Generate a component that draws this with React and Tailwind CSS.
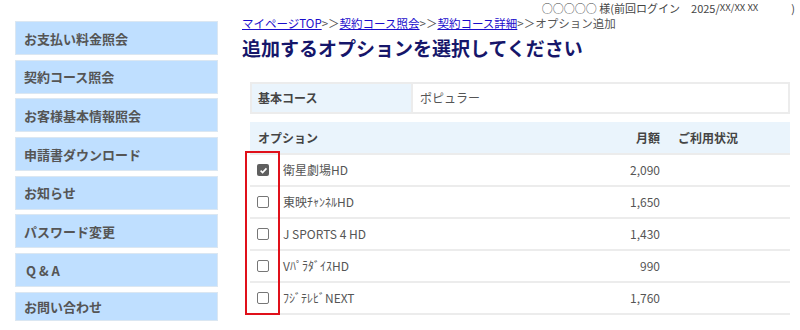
import React from "react";

const menu = [
  "お支払い料金照会",
  "契約コース照会",
  "お客様基本情報照会",
  "申請書ダウンロード",
  "お知らせ",
  "パスワード変更",
  "Q & A",
  "お問い合わせ",
];

const options = [
  { name: "衛星劇場HD", price: "2,090", checked: true },
  { name: "東映ﾁｬﾝﾈﾙHD", price: "1,650" },
  { name: "J SPORTS 4 HD", price: "1,430" },
  { name: "VﾊﾟﾗﾀﾞｲｽHD", price: "990" },
  { name: "ﾌｼﾞﾃﾚﾋﾞNEXT", price: "1,760" },
];

function Box({ checked }) {
  if (checked) {
    return (
      <span className="flex h-[12px] w-[12px] items-center justify-center rounded-[2px] bg-[#5f5f5f]">
        <svg width="9" height="9" viewBox="0 0 10 10">
          <path d="M1.8 5.2 L4 7.3 L8.3 2.6" fill="none" stroke="#fff" strokeWidth="1.8" />
        </svg>
      </span>
    );
  }
  return <span className="block h-[12px] w-[12px] rounded-[2px] border border-[#767676] bg-white" />;
}

export default function App() {
  return (
    <div
      className="flex h-[330px] w-[800px] overflow-hidden bg-white pl-[15px] text-[#555]"
      style={{ fontFamily: '"Noto Sans CJK JP", "Noto Sans", sans-serif' }}
    >
      <nav className="mt-[21px] flex w-[203px] shrink-0 flex-col gap-[4.7px]">
        {menu.map((m, i) => (
          <div
            key={m}
            className={`flex items-center border border-[#dbe7f2] bg-[#bfdfff] pl-[8px] text-[13px] font-bold leading-none text-[#555] ${
              i === menu.length - 1 ? "h-[29px]" : "h-[34px]"
            } ${m === "Q & A" ? "pl-[10px]" : ""}`}
          >
            {m}
          </div>
        ))}
      </nav>
      <main className="ml-[24px] flex-1 pr-[5px]">
        <div className="flex h-[16px] items-center justify-end text-[11px] leading-none text-[#444]">
          <span>○○○○○ 様(前回ログイン　2025/</span>
          <span className="text-[9.5px]">XX/XX XX</span>
          <span>　　　)</span>
        </div>
        <div className="text-[11.5px] leading-[14px] text-[#555]">
          <a className="text-[#1a0dcc] underline">マイページTOP</a>&gt;＞
          <a className="text-[#1a0dcc] underline">契約コース照会</a>&gt;＞
          <a className="text-[#1a0dcc] underline">契約コース詳細</a>&gt;＞オプション追加
        </div>
        <h1 className="mt-[5px] text-[19px] font-bold leading-[26px] text-[#16166a]">
          追加するオプションを選択してください
        </h1>
        <div className="ml-[8px] mt-[21px] w-[540px]">
          <div className="flex h-[32px] border-2 border-[#ececec] text-[12px]">
            <div className="flex w-[161px] items-center border-r-2 border-[#ececec] bg-[#eaf4fc] pl-[6px] font-bold text-[#444]">
              基本コース
            </div>
            <div className="flex flex-1 items-center pl-[7px] text-[#555]">ポピュラー</div>
          </div>
          <div className="relative mt-[8px] text-[12px]">
            <div className="grid h-[33px] grid-cols-[30px_1fr_111px_120px] items-center border-b-2 border-[#ececec] bg-[#eaf4fc] font-bold text-[#444]">
              <div className="col-span-2 pl-[8px]">オプション</div>
              <div className="pr-[10px] text-right">月額</div>
              <div className="pl-[8px]">ご利用状況</div>
            </div>
            {options.map((o) => (
              <div
                key={o.name}
                className="grid h-[32px] grid-cols-[30px_1fr_111px_120px] items-center border-b-2 border-[#ececec] text-[#555]"
              >
                <div className="flex pl-[7px]">
                  <Box checked={o.checked} />
                </div>
                <div className="pl-[3px]">{o.name}</div>
                <div className="pr-[10px] text-right">{o.price}</div>
                <div />
              </div>
            ))}
            <div className="pointer-events-none absolute left-[-5px] top-[29px] h-[164px] w-[35px] border-2 border-[#e0101a]" />
          </div>
        </div>
      </main>
    </div>
  );
}
